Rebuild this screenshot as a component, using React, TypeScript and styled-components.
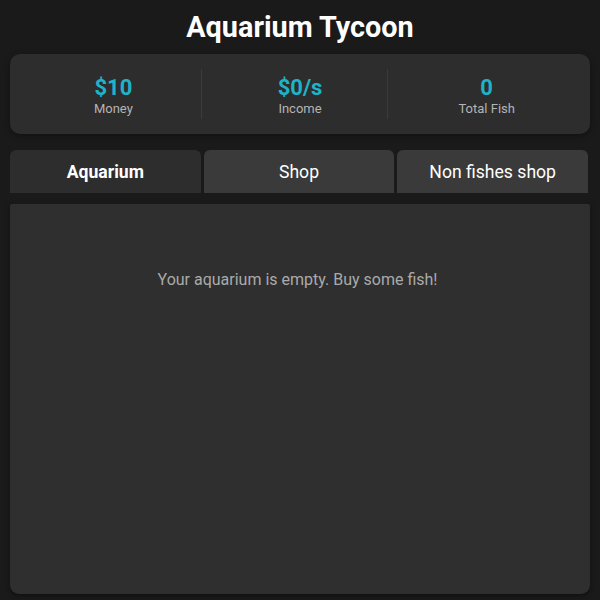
import React, { useState } from "react";
import styled, { createGlobalStyle } from "styled-components";

const GlobalStyle = createGlobalStyle`
  html, body {
    margin: 0;
    padding: 0;
    background: #1a1a1a;
    font-family: Roboto, "Liberation Sans", Arial, sans-serif;
    color: #ffffff;
  }
  * { box-sizing: border-box; }
`;

const Page = styled.div`
  padding: 0 10px 10px;
  display: flex;
  flex-direction: column;
`;

const Title = styled.h1`
  margin: 0;
  height: 54px;
  display: flex;
  align-items: center;
  justify-content: center;
  font-size: 28.8px;
  font-weight: 700;
  color: #ffffff;
`;

const StatsCard = styled.div`
  display: flex;
  height: 80px;
  padding: 0 10px;
  align-items: center;
  background: #2d2d2d;
  border-radius: 10px;
  box-shadow: 0 2px 6px rgba(0, 0, 0, 0.35);
`;

const Stat = styled.div`
  position: relative;
  flex: 1;
  display: flex;
  flex-direction: column;
  align-items: center;
  justify-content: center;
  height: 50px;
  padding-top: 4px;

  &:not(:last-child)::after {
    content: "";
    position: absolute;
    right: 5px;
    top: 0;
    bottom: 0;
    width: 1px;
    background: #3b3b3b;
  }
`;

const StatValue = styled.div`
  font-size: 22px;
  font-weight: 700;
  line-height: 26px;
  color: #1fb3c9;
`;

const StatLabel = styled.div`
  font-size: 13px;
  line-height: 16px;
  color: #b4b4b4;
`;

const TabBar = styled.div`
  display: flex;
  gap: 3px;
  margin-top: 16px;
  padding-right: 2px;
`;

const Tab = styled.button<{ $active: boolean }>`
  flex: 1;
  height: 43px;
  border: none;
  border-radius: 6px 6px 0 0;
  background: ${(p) => (p.$active ? "#2d2d2d" : "#3a3a3a")};
  color: #ffffff;
  font-family: inherit;
  font-size: 17.6px;
  font-weight: ${(p) => (p.$active ? 700 : 400)};
  cursor: pointer;
`;

const Panel = styled.div`
  margin-top: 11px;
  height: 390px;
  background: #2f2f2f;
  border-radius: 2px 2px 9px 9px;
  box-shadow: 0 2px 5px rgba(0, 0, 0, 0.4);
  display: flex;
  justify-content: center;
  padding-top: 66px;
  padding-right: 5px;
`;

const EmptyText = styled.p`
  margin: 0;
  font-size: 16px;
  line-height: 20px;
  color: #aaaaaa;
`;

const tabs = ["Aquarium", "Shop", "Non fishes shop"];

export default function App() {
  const [active, setActive] = useState(0);
  return (
    <>
      <GlobalStyle />
      <Page>
        <Title>Aquarium Tycoon</Title>
        <StatsCard>
          <Stat>
            <StatValue>$10</StatValue>
            <StatLabel>Money</StatLabel>
          </Stat>
          <Stat>
            <StatValue>$0/s</StatValue>
            <StatLabel>Income</StatLabel>
          </Stat>
          <Stat>
            <StatValue>0</StatValue>
            <StatLabel>Total Fish</StatLabel>
          </Stat>
        </StatsCard>
        <TabBar>
          {tabs.map((t, i) => (
            <Tab key={t} $active={i === active} onClick={() => setActive(i)}>
              {t}
            </Tab>
          ))}
        </TabBar>
        <Panel>
          <EmptyText>Your aquarium is empty. Buy some fish!</EmptyText>
        </Panel>
      </Page>
    </>
  );
}
